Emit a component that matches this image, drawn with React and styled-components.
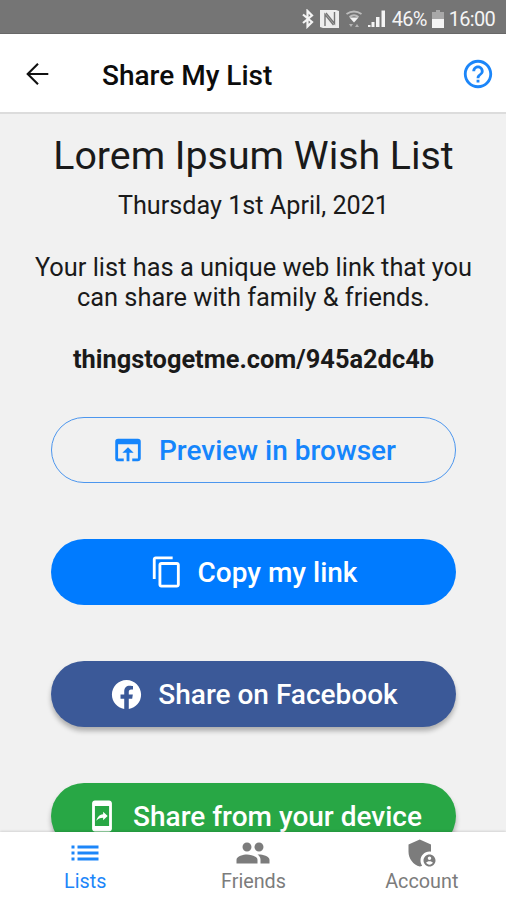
import React from 'react'
import styled, { createGlobalStyle } from 'styled-components'
import {
  MdHelpOutline,
  MdOpenInBrowser,
  MdContentCopy,
  MdMobileScreenShare,
  MdList,
  MdPeople,
  MdAdminPanelSettings,
} from 'react-icons/md'

const GlobalStyle = createGlobalStyle`
  * {
    box-sizing: border-box;
  }

  body {
    margin: 0;
    font-family: Roboto, 'Liberation Sans', sans-serif;
    background: #f1f1f1;
  }
`;

const Screen = styled.div`
  width: 506px;
  height: 900px;
  display: flex;
  flex-direction: column;
  overflow: hidden;
  background: #f1f1f1;
`;

const StatusBar = styled.div`
  flex: none;
  height: 34px;
  padding: 4px 11px 0 0;
  display: flex;
  align-items: center;
  justify-content: flex-end;
  color: #f4f4f4;
  background: #757575;
  border-bottom: 1px solid #686868;
`;

const StatusText = styled.span`
  font-size: 20px;
  line-height: 24px;
  letter-spacing: -0.7px;
`;

const StatusIcons = styled.svg`
  display: block;
  margin-right: 5px;
`;

const Battery = styled.svg`
  display: block;
  margin: 0 5px 0 5px;
`;

const Header = styled.header`
  flex: none;
  height: 80px;
  padding: 0 11px 0 26px;
  display: flex;
  align-items: center;
  background: #ffffff;
  border-bottom: 2px solid #dcdcdc;
`;

const HeaderTitle = styled.h1`
  flex: 1;
  margin: 5px 0 0 53px;
  font-size: 28px;
  line-height: 32px;
  font-weight: 500;
  color: #0c0c0c;
`;

const IconButton = styled.button`
  display: flex;
  padding: ${props => props.$top || '0'} 0 0;
  border: none;
  background: none;
  color: ${props => props.$color};
  cursor: pointer;
`;

const Content = styled.main`
  flex: 1;
  min-height: 0;
  padding: 18px 50px 0 51px;
  overflow: hidden;
  text-align: center;
  color: #1a1a1a;
`;

const ListName = styled.h2`
  margin: 0;
  font-size: 39.3px;
  line-height: 48px;
  font-weight: 400;
  white-space: nowrap;
`;

const ListDate = styled.div`
  margin-top: 11px;
  font-size: 25.2px;
  line-height: 30px;
`;

const Description = styled.p`
  margin: 31px -20px 0;
  font-size: 25.4px;
  line-height: 30px;
`;

const Link = styled.div`
  margin-top: 32px;
  font-size: 25.4px;
  line-height: 30px;
  font-weight: 700;
`;

const Buttons = styled.div`
  margin-top: 43px;
  display: flex;
  flex-direction: column;
  gap: 56px;
`;

const Button = styled.button`
  height: 66px;
  padding: 0;
  display: flex;
  align-items: center;
  justify-content: center;
  gap: ${props => props.$gap};
  font-family: inherit;
  font-size: 28px;
  font-weight: 500;
  color: ${props => props.$color || '#ffffff'};
  background: ${props => props.$bg};
  border: ${props => props.$border || 'none'};
  border-radius: 33px;
  box-shadow: ${props => props.$raised ? '0 4px 5px rgba(0, 0, 0, 0.28)' : 'none'};
  cursor: pointer;

  svg {
    flex: none;
  }
`;

const TabBar = styled.nav`
  position: relative;
  flex: none;
  height: 68px;
  padding-left: 1px;
  display: grid;
  grid-template-columns: repeat(3, 1fr);
  background: #ffffff;
  box-shadow: 0 -1px 2px rgba(0, 0, 0, 0.12);
`;

const Tab = styled.div`
  padding-top: 3px;
  display: flex;
  flex-direction: column;
  align-items: center;
  font-size: 19.8px;
  line-height: 21px;
  color: ${props => props.$active ? '#1c86f9' : '#7c7c7c'};
`;

const BackIcon = () => (
  <svg width="23" height="24" viewBox="0 0 23 24" fill="none" stroke="currentColor" strokeWidth="2.1">
    <path d="M22.300 12H2M12 1.700L1.700 12L12 22.300" />
  </svg>
);

const FacebookIcon = () => (
  <svg width="35" height="35" viewBox="0 0 24 24" fill="currentColor">
    <path d="M12 2.04C6.5 2.04 2 6.53 2 12.06C2 17.06 5.66 21.21 10.44 21.96V14.96H7.9V12.06H10.44V9.85C10.44 7.34 11.93 5.96 14.22 5.96C15.31 5.96 16.45 6.15 16.45 6.15V8.62H15.19C13.95 8.62 13.56 9.39 13.56 10.18V12.06H16.34L15.89 14.96H13.56V21.96A10 10 0 0 0 22 12.06C22 6.53 17.5 2.04 12 2.04Z" />
  </svg>
);

const tabs = [
  { label: 'Lists', Icon: MdList, active: true },
  { label: 'Friends', Icon: MdPeople },
  { label: 'Account', Icon: MdAdminPanelSettings },
]

const App = () => {
  return (
    <>
      <GlobalStyle />
      <Screen>
        <StatusBar>
          {/* bluetooth, nfc, wifi and signal */}
          <StatusIcons width="86" height="20" viewBox="0 0 86 20" fill="none">
            <path d="M2 5.500l9 7.500-4.500 4.500V2l4.500 4.500-9 7.500" stroke="#f4f4f4" strokeWidth="2.2" />
            <path d="M19 1h16l3 1v17h-16l-3-1z" fill="#ededed" />
            <path d="M24 17V5.500l8.500 10.500M33.500 3v11.500l-8.500-10.500" stroke="#757575" strokeWidth="1.4" />
            <path d="M45.500 5q7.500-5 15 0M48.500 8q4.500-3.500 9 0" stroke="#bdbdbd" strokeWidth="1.9" />
            <path d="M48.500 8.500h9l-4.500 5z" fill="#f4f4f4" />
            <path d="M48 15h4l-2 3zM54 18h4l-2-3z" fill="#b5b5b5" />
            <path d="M67 18v-2h2.500v2zM70.500 18v-5h3v5zM75 18V8h3.500v10zM80.500 18V1.500h3.500V18z" fill="#f4f4f4" />
          </StatusIcons>
          <StatusText>46%</StatusText>
          <Battery width="12" height="18" viewBox="0 0 12 18">
            <path d="M4 0h4v2h4v8H0V2h4z" fill="#a8a8a8" />
            <path d="M0 9h12v9H0z" fill="#f4f4f4" />
          </Battery>
          <StatusText>16:00</StatusText>
        </StatusBar>

        <Header>
          <IconButton $color="#111111" $top="1px" aria-label="Back">
            <BackIcon />
          </IconButton>
          <HeaderTitle>Share My List</HeaderTitle>
          <IconButton $color="#1c86f9" $top="2px" aria-label="Help">
            <MdHelpOutline size={34} />
          </IconButton>
        </Header>

        <Content>
          <ListName>Lorem Ipsum Wish List</ListName>
          <ListDate>Thursday 1st April, 2021</ListDate>
          <Description>
            Your list has a unique web link that you<br />
            can share with family &amp; friends.
          </Description>
          <Link>thingstogetme.com/945a2dc4b</Link>

          <Buttons>
            <Button $bg="transparent" $color="#1585fc" $border="1px solid #4c96ee" $gap="14px">
              <MdOpenInBrowser size={34} />
              Preview in browser
            </Button>
            <Button $bg="#007bff" $gap="14px">
              <MdContentCopy size={34} />
              Copy my link
            </Button>
            <Button $bg="#3b5998" $gap="14px" $raised>
              <FacebookIcon />
              Share on Facebook
            </Button>
            <Button $bg="#28a745" $gap="14px" $raised>
              <MdMobileScreenShare size={34} />
              Share from your device
            </Button>
          </Buttons>
        </Content>

        <TabBar>
          {tabs.map(({ label, Icon, active }) => (
            <Tab key={label} $active={active}>
              <Icon size={36} />
              {label}
            </Tab>
          ))}
        </TabBar>
      </Screen>
    </>
  )
}

export default App
